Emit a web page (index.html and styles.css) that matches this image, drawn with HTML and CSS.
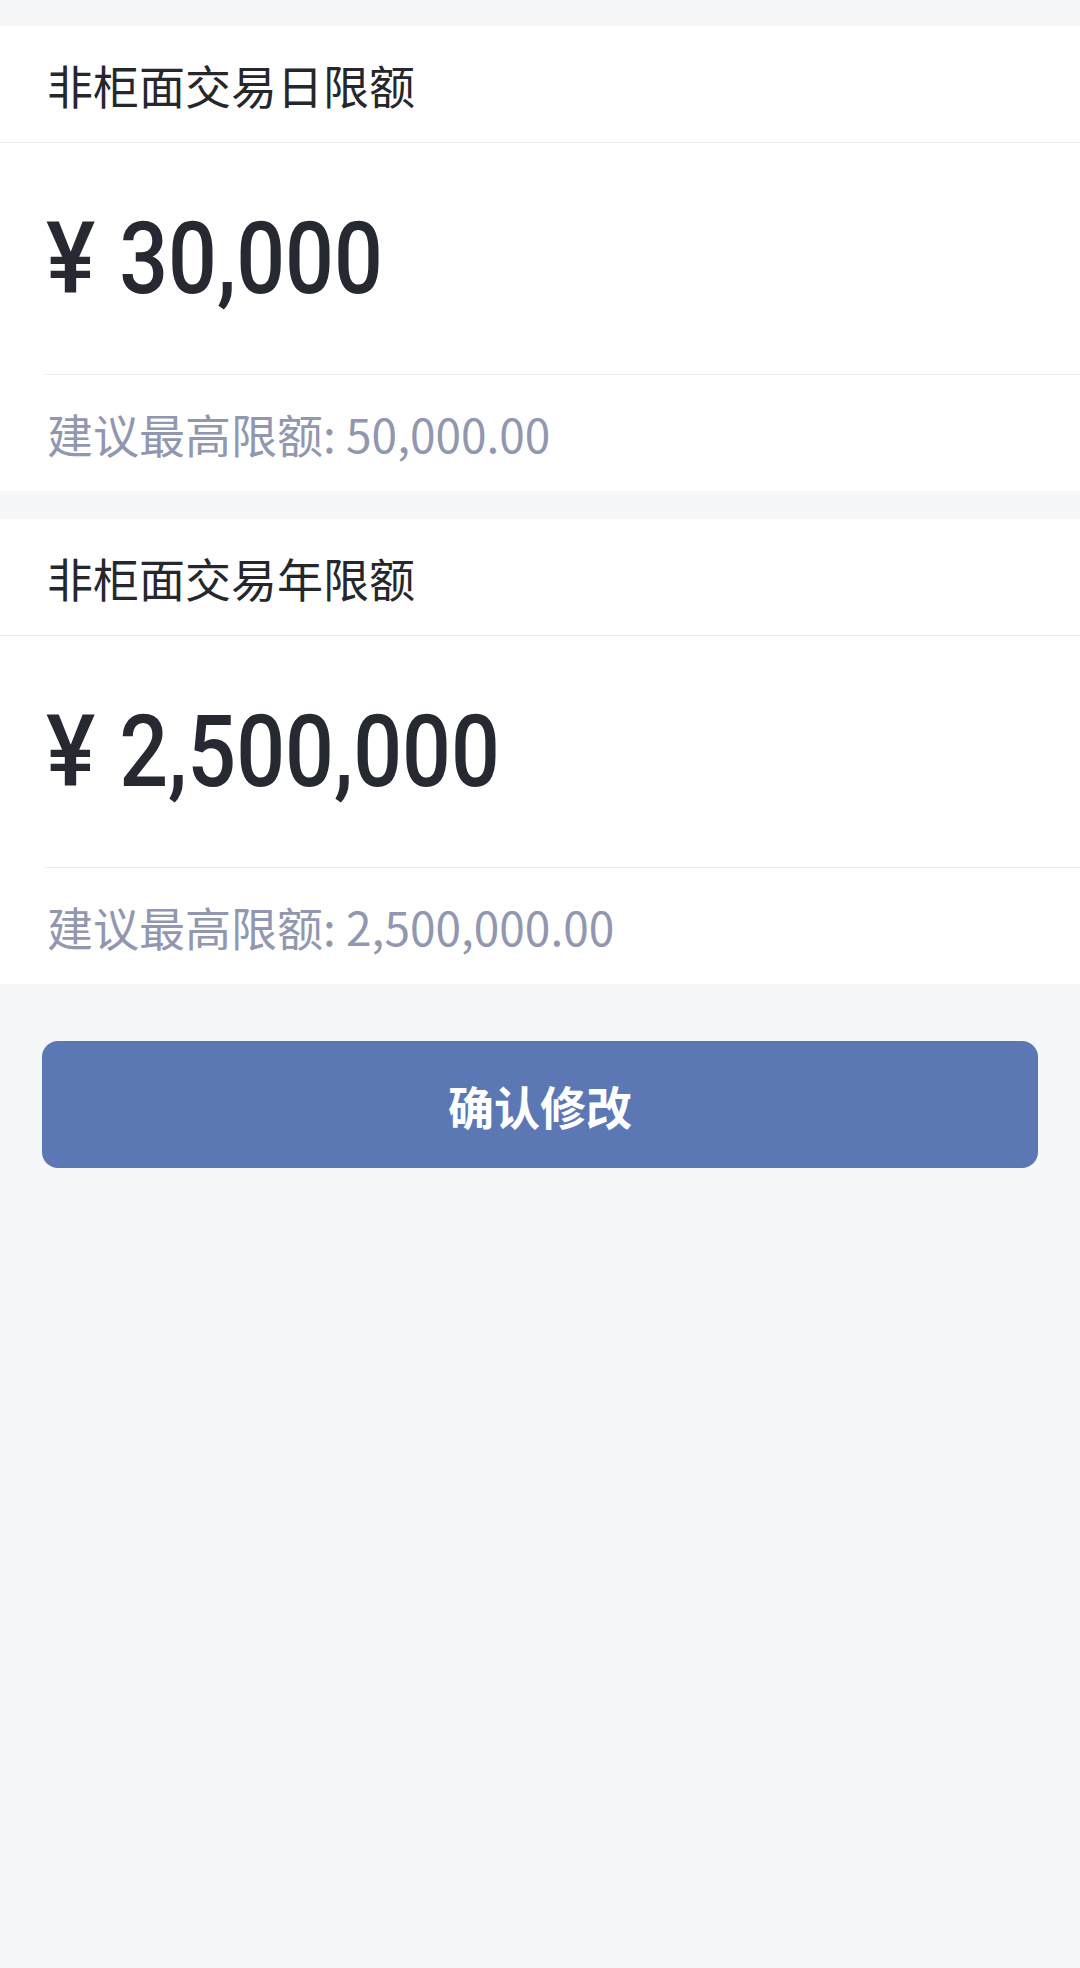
FILE: index.html
```html
<!DOCTYPE html>
<html lang="zh-CN">
<head>
<meta charset="utf-8">
<title>修改限额</title>
<link rel="stylesheet" href="styles.css">
</head>
<body>
<main class="page">
  <section class="card">
    <div class="card-title">非柜面交易日限额</div>
    <div class="amount"><span class="amount-text"><span class="yen">¥</span><span class="num">30,000</span></span></div>
    <div class="hint">建议最高限额: 50,000.00</div>
  </section>
  <section class="card">
    <div class="card-title">非柜面交易年限额</div>
    <div class="amount"><span class="amount-text"><span class="yen">¥</span><span class="num">2,500,000</span></span></div>
    <div class="hint">建议最高限额: 2,500,000.00</div>
  </section>
  <div class="actions">
    <button class="btn-primary" type="button">确认修改</button>
  </div>
</main>
</body>
</html>
```
FILE: styles.css
```css
html, body {
  margin: 0;
  padding: 0;
  background: #f6f7f9;
}
body {
  font-family: "Noto Sans CJK SC", "Noto Sans", sans-serif;
  color: #25272e;
  width: 1080px;
  min-height: 1968px;
}
.page {
  display: flex;
  flex-direction: column;
  gap: 28px;
  padding-top: 26px;
}
.card {
  background: #ffffff;
  display: flex;
  flex-direction: column;
}
.card-title {
  height: 116px;
  display: flex;
  align-items: center;
  padding-left: 47px;
  font-size: 46px;
  color: #26272c;
  border-bottom: 1px solid #ededed;
}
.amount {
  height: 231px;
  display: flex;
  align-items: center;
  padding-left: 46px;
}
.amount-text {
  display: inline-flex;
  align-items: baseline;
  gap: 32px;
  font-family: Roboto, "Noto Sans", sans-serif;
  font-weight: 500;
  font-size: 100px;
  line-height: 1;
  color: #262931;
  transform: scaleX(0.86);
  transform-origin: left center;
}
.yen {
  display: inline-block;
  transform: scaleX(1.08);
  transform-origin: left center;
}
.hint {
  margin-left: 45px;
  border-top: 1px solid #ededed;
  height: 116px;
  display: flex;
  align-items: center;
  padding-left: 2px;
  font-size: 46px;
  color: #9197b0;
}
.actions {
  padding: 29px 42px 0 42px;
}
.btn-primary {
  display: block;
  width: 100%;
  height: 127px;
  border: none;
  border-radius: 16px;
  background: #5b78b5;
  color: #ffffff;
  font-family: "Noto Sans CJK SC", "Noto Sans", sans-serif;
  font-weight: 700;
  font-size: 46px;
  cursor: pointer;
}
```
